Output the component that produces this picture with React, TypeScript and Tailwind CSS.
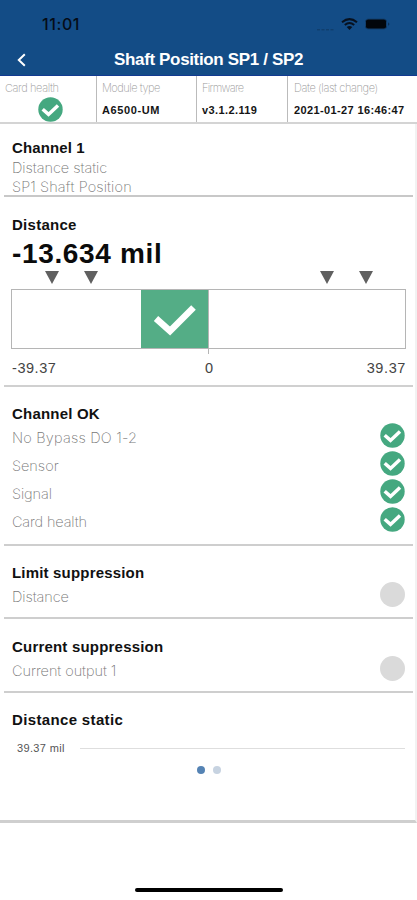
import React from "react";

const sans = "font-['Liberation_Sans',Arial,sans-serif]";
const thin = "font-['Inter',sans-serif] font-extralight";

function CheckCircle() {
  return (
    <svg className="block size-[25px] shrink-0" viewBox="0 0 25 25">
      <circle cx="12.5" cy="12.5" r="12.2" fill="#45a880" />
      <path d="M4.7 12.2 L10.5 17.4 L20 8.4" fill="none" stroke="#fff" strokeWidth="3.5" />
    </svg>
  );
}

function Heading({ children, className = "" }: { children: React.ReactNode; className?: string }) {
  return <h2 className={`h-[20px] whitespace-nowrap text-[15px] font-bold leading-[20px] text-[#111] ${className}`}>{children}</h2>;
}

function Row({ label, tracking, ok }: { label: string; tracking: string; ok: boolean }) {
  return (
    <div className="flex h-[28.1px] items-start justify-between pr-[8px]">
      <span className={`${thin} mt-[5px] whitespace-nowrap text-[14.5px] leading-[20px] text-[#777] ${tracking}`}>{label}</span>
      {ok ? <CheckCircle /> : <span className="block size-[25px] rounded-full bg-[#dadada]" />}
    </div>
  );
}

function Marker({ className }: { className: string }) {
  return (
    <svg className={`absolute top-[-1px] h-[13px] w-[14px] ${className}`} viewBox="0 0 14 13">
      <path d="M0 0 H14 L7 13 Z" fill="#606060" />
    </svg>
  );
}

function InfoCell({ label, value, className, tracking, valueTracking }: { label: string; value?: string; className: string; tracking: string; valueTracking?: string }) {
  return (
    <div className={`flex flex-col whitespace-nowrap ${className}`}>
      <span className={`${thin} mt-[5px] h-[14px] text-[11px] leading-[14px] text-[#999] ${tracking}`}>{label}</span>
      {value ? (
        <span className={`mt-[8px] text-[11px] font-bold leading-[14px] text-[#151515] ${valueTracking}`}>{value}</span>
      ) : (
        <div className="ml-[33px] mt-[2px]"><CheckCircle /></div>
      )}
    </div>
  );
}

export default function App() {
  return (
    <div className={`${sans} flex h-[900px] w-[417px] flex-col overflow-hidden bg-white`}>
      <header className="h-[76px] shrink-0 border-b border-[#123a91] bg-[#134c86]">
        <div className="flex h-[48px] items-center pl-[42px] text-[#050c17]">
          <span className="w-[37px] whitespace-nowrap font-['Inter',sans-serif] text-[16px] font-medium leading-[20px] tracking-[0.6px]">11:01</span>
          <svg className="ml-[236px] h-[14px] w-[76px]" viewBox="0 0 76 14">
            <path d="M2 12.8H19" stroke="#103963" strokeWidth="1" strokeDasharray="3 1.5" />
            <path d="M27 5.3 Q34.5 -1 42 5.3 M29.8 8 Q34.5 4 39.2 8" fill="none" stroke="#07111f" strokeWidth="2" />
            <path d="M31.7 10 Q34.5 7.8 37.3 10 L34.5 13Z" fill="#07111f" />
            <rect x="50.5" y="2" width="21" height="10" rx="2.5" fill="#02060b" stroke="#123e6c" />
            <path d="M73.3 5.2 Q75.3 7 73.3 8.8Z" fill="#0a2544" />
          </svg>
        </div>
        <div className="flex h-[24px] items-center pl-[17px] text-white">
          <svg className="h-[14px] w-[10px]" viewBox="0 0 10 14"><path d="M7.8 1.2 L1.8 7 L7.8 12.8" fill="none" stroke="white" strokeWidth="2" /></svg>
          <h1 className="ml-[87px] whitespace-nowrap text-[17px] font-bold leading-[22px] tracking-[-0.35px]">Shaft Position SP1 / SP2</h1>
        </div>
      </header>
      <section className="flex h-[48px] shrink-0 border-b-2 border-[#d4d4d4]">
        <InfoCell label="Card health" className="w-[97px] border-r border-[#bbb] pl-[5px]" tracking="tracking-[-0.4px]" />
        <InfoCell label="Module type" value="A6500-UM" className="w-[100px] border-r border-[#bbb] pl-[5px]" tracking="tracking-[-0.5px]" valueTracking="tracking-[0.6px]" />
        <InfoCell label="Firmware" value="v3.1.2.119" className="w-[91px] border-r border-[#bbb] pl-[5px]" tracking="tracking-[-0.7px]" valueTracking="tracking-[0.4px]" />
        <InfoCell label="Date (last change)" value="2021-01-27 16:46:47" className="w-[129px] pl-[6px]" tracking="tracking-[-0.4px]" valueTracking="tracking-[0.38px]" />
      </section>
      <main className="flex h-[699px] shrink-0 flex-col border-b-[3px] border-r-2 border-b-[#cfcfcf] border-r-[#f2f2f2] pl-[4px] pr-[2px]">
        <section className="h-[73px] shrink-0 border-b-2 border-[#c8c8c8] pl-[8px] pt-[14px]">
          <Heading className="tracking-[0.12px]">Channel 1</Heading>
          <p className={`${thin} whitespace-nowrap text-[14.5px] leading-[19px] tracking-[-0.05px] text-[#777]`}>Distance static</p>
          <p className={`${thin} whitespace-nowrap text-[14.5px] leading-[19px] tracking-[0.13px] text-[#777]`}>SP1 Shaft Position</p>
        </section>
        <section className="h-[190px] shrink-0 border-b-2 border-[#d0d0d0] pl-[8px] pr-[7px] pt-[18px]">
          <Heading className="tracking-[0.27px]">Distance</Heading>
          <p className="mt-[3px] h-[32px] whitespace-nowrap text-[28px] font-bold leading-[32px] tracking-[0.65px] text-[#0b0b0b]">-13.634 mil</p>
          <div className="relative mt-[2px] h-[17px]">
            <Marker className="left-[33px]" />
            <Marker className="left-[72px]" />
            <Marker className="left-[308px]" />
            <Marker className="left-[347px]" />
          </div>
          <div className="ml-[-1px] flex h-[60px] border border-[#b5b5b5]">
            <div className="ml-[129px] flex h-[58px] w-[68px] items-center justify-center bg-[#54ad86]">
              <svg className="mt-[4px] h-[34px] w-[44px]" viewBox="0 0 44 34"><path d="M3 14.5 L17 27 L40.5 3.5" fill="none" stroke="white" strokeWidth="6.5" /></svg>
            </div>
            <div className="ml-[-1px] h-[64px] w-px bg-[#b5b5b5]" />
          </div>
          <div className="mt-[9px] grid grid-cols-3 text-[14.5px] leading-[20px] text-[#444]">
            <span className="tracking-[0.55px]">-39.37</span><span className="text-center">0</span><span className="text-right tracking-[0.6px]">39.37</span>
          </div>
        </section>
        <section className="h-[158.5px] shrink-0 border-b-2 border-[#cecece] pl-[8px] pt-[17px]">
          <Heading className="mb-[-1px] tracking-[0.2px]">Channel OK</Heading>
          <Row label="No Bypass DO 1-2" tracking="tracking-[0.2px]" ok />
          <Row label="Sensor" tracking="tracking-[0px]" ok />
          <Row label="Signal" tracking="tracking-[-0.1px]" ok />
          <Row label="Card health" tracking="tracking-[-0.15px]" ok />
        </section>
        <section className="h-[73.5px] shrink-0 border-b-2 border-[#cecece] pl-[8px] pt-[17.5px]">
          <Heading className="mb-[-1px] tracking-[0.18px]">Limit suppression</Heading>
          <Row label="Distance" tracking="tracking-[-0.1px]" ok={false} />
        </section>
        <section className="h-[74px] shrink-0 border-b-2 border-[#cecece] pl-[8px] pt-[17.5px]">
          <Heading className="mb-[-1px] tracking-[0.2px]">Current suppression</Heading>
          <Row label="Current output 1" tracking="tracking-[-0.05px]" ok={false} />
        </section>
        <section className="pl-[8px] pt-[17px]">
          <Heading className="tracking-[0.35px]">Distance static</Heading>
          <div className="mt-[10px] flex h-[16px] items-center pl-[5px] pr-[8px]">
            <span className="w-[63px] whitespace-nowrap text-[11px] leading-[16px] tracking-[0.35px] text-[#555]">39.37 mil</span>
            <span className="h-px flex-1 bg-[#dedede]" />
          </div>
          <div className="ml-[185px] mt-[10px] flex gap-[8px]">
            <span className="size-[8px] rounded-full bg-[#5583b4]" />
            <span className="size-[8px] rounded-full bg-[#c7d3e1]" />
          </div>
        </section>
      </main>
      <footer className="pt-[65px]"><div className="ml-[135px] h-[4px] w-[148px] rounded-full bg-black" /></footer>
    </div>
  );
}
